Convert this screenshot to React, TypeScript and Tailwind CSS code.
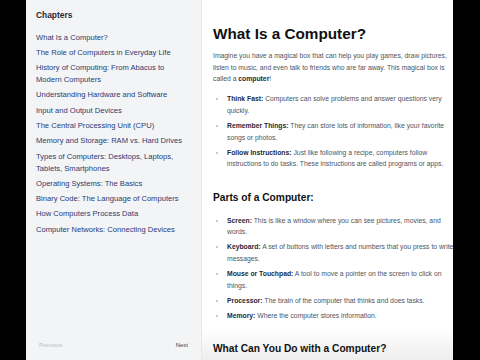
import React from "react";

const chapters = [
  "What Is a Computer?",
  "The Role of Computers in Everyday Life",
  "History of Computing: From Abacus to Modern Computers",
  "Understanding Hardware and Software",
  "Input and Output Devices",
  "The Central Processing Unit (CPU)",
  "Memory and Storage: RAM vs. Hard Drives",
  "Types of Computers: Desktops, Laptops, Tablets, Smartphones",
  "Operating Systems: The Basics",
  "Binary Code: The Language of Computers",
  "How Computers Process Data",
  "Computer Networks: Connecting Devices",
];

const list1: [string, string][] = [
  ["Think Fast:", "Computers can solve problems and answer questions very quickly."],
  ["Remember Things:", "They can store lots of information, like your favorite songs or photos."],
  ["Follow Instructions:", "Just like following a recipe, computers follow instructions to do tasks. These instructions are called programs or apps."],
];

const list2: [string, string][] = [
  ["Screen:", "This is like a window where you can see pictures, movies, and words."],
  ["Keyboard:", "A set of buttons with letters and numbers that you press to write messages."],
  ["Mouse or Touchpad:", "A tool to move a pointer on the screen to click on things."],
  ["Processor:", "The brain of the computer that thinks and does tasks."],
  ["Memory:", "Where the computer stores information."],
];

function Items({ items }: { items: [string, string][] }) {
  return (
    <ul className="list-disc pl-[14px] flex flex-col gap-[3.4px] marker:text-[#b5b9c0]">
      {items.map(([b, t]) => (
        <li key={b} className="text-[6.8px] leading-[11.7px] text-[#4b5563]">
          <strong className="font-bold text-[#1f2937]">{b}</strong> {t}
        </li>
      ))}
    </ul>
  );
}

export default function App() {
  return (
    <div
      className="w-[480px] h-[360px] bg-black flex overflow-hidden"
      style={{ fontFamily: '"Liberation Sans", Arial, sans-serif' }}
    >
      <div className="w-[26px] shrink-0" />
      <div className="w-[427px] h-[360px] shrink-0 flex overflow-hidden bg-white">
        <aside className="w-[176px] shrink-0 h-full bg-[#f3f4f6] border-r border-[#e6e8eb] flex flex-col">
          <div className="flex-1 pt-[10px] pl-[10px] pr-[14px]">
            <h2 className="text-[8.4px] leading-[11px] font-bold text-[#1f2937] mb-[10.5px]">Chapters</h2>
            <ul className="flex flex-col gap-[3.3px]">
              {chapters.map((c) => (
                <li key={c} className="text-[7.6px] leading-[12px] text-[#2b3a70]">
                  {c}
                </li>
              ))}
            </ul>
          </div>
          <div className="flex justify-between items-center px-[10px] pb-[8px]">
            <button className="px-[3px] py-[4px] text-[5.95px] leading-[6px] text-[#b8bcc3]">Previous</button>
            <button className="px-[3px] py-[4px] text-[5.95px] leading-[6px] text-[#374151]">Next</button>
          </div>
        </aside>
        <main className="flex-1 h-full overflow-hidden pl-[11px] pt-[25px] bg-linear-to-b from-white from-[91%] to-[#eeeeee]">
          <div className="w-[246px]">
            <h1 className="text-[15.3px] leading-[18px] font-bold text-[#111111] mb-[7.2px]">What Is a Computer?</h1>
            <p className="text-[6.8px] leading-[11.6px] text-[#4b5563] mb-[8.2px]">
              Imagine you have a magical box that can help you play games, draw pictures, listen to music, and even talk
              to friends who are far away. This magical box is called a{" "}
              <strong className="font-bold text-[#1f2937]">computer</strong>!
            </p>
            <Items items={list1} />
            <h2 className="text-[10.2px] leading-[13px] font-bold text-[#111111] mt-[21px] mb-[10.4px]">
              Parts of a Computer:
            </h2>
            <Items items={list2} />
            <h2 className="text-[10.2px] leading-[13px] font-bold text-[#111111] mt-[20.6px]">
              What Can You Do with a Computer?
            </h2>
          </div>
        </main>
      </div>
    </div>
  );
}
